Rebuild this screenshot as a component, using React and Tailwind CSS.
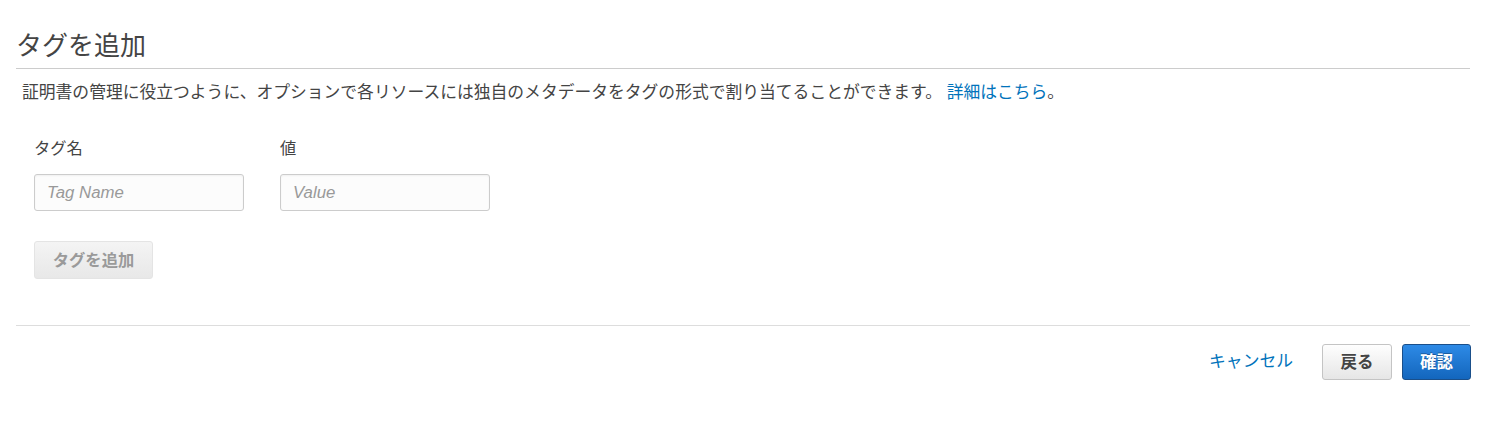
export default function App() {
  const font = { fontFamily: '"Liberation Sans", "Noto Sans CJK JP", sans-serif' };

  return (
    <div className="w-full min-h-[423px] bg-white pl-4 pr-[34px] text-[#444]" style={font}>
      <h1 className="text-[26px] leading-[30px] font-normal text-[#444] pt-[31px] pb-[7px] border-b border-[#ccc] mr-[1px]">
        タグを追加
      </h1>

      <p className="ml-[6px] mt-[14px] text-[16.8px] leading-[20px] text-[#444]">
        証明書の管理に役立つように、オプションで各リソースには独自のメタデータをタグの形式で割り当てることができます。{' '}
        <a href="#" className="text-[#0073bb]">詳細はこちら</a>。
      </p>

      <div className="pl-[18px] mt-[35px]">
        <div className="flex gap-[36px]">
          <div className="flex flex-col w-[210px]">
            <label className="text-[16.3px] leading-[20px] text-[#444]">タグ名</label>
            <input
              placeholder="Tag Name"
              className="mt-4 h-[37px] w-[210px] rounded-[3px] border border-[#ccc] bg-[#fcfcfc] px-[12px] text-[16.8px] shadow-[inset_0_1px_2px_rgba(0,0,0,0.05)] placeholder:italic placeholder:text-[#999] outline-none"
            />
          </div>
          <div className="flex flex-col w-[210px]">
            <label className="text-[16.3px] leading-[20px] text-[#444]">値</label>
            <input
              placeholder="Value"
              className="mt-4 h-[37px] w-[210px] rounded-[3px] border border-[#ccc] bg-[#fcfcfc] px-[12px] text-[16.8px] shadow-[inset_0_1px_2px_rgba(0,0,0,0.05)] placeholder:italic placeholder:text-[#999] outline-none"
            />
          </div>
        </div>

        <button
          disabled
          className="mt-[30px] h-[38px] w-[119px] rounded-[3px] border border-[#e4e4e4] bg-gradient-to-b from-[#f4f4f4] to-[#e8e8e8] text-[16.3px] font-bold text-[#9a9a9a]"
        >
          タグを追加
        </button>
      </div>

      <div className="mt-[46px] border-t border-[#ddd] mr-[1px]" />

      <div className="flex items-center justify-end mt-[18px]">
        <a href="#" className="text-[16.8px] leading-[20px] text-[#0073bb] mr-[29px]">キャンセル</a>
        <button className="h-[36px] w-[70px] rounded-[3px] border border-[#c4c4c4] bg-gradient-to-b from-[#fefefe] to-[#e6e6e6] text-[16.5px] font-bold text-[#444] mr-[10px]">
          戻る
        </button>
        <button className="h-[36px] w-[69px] rounded-[3px] border border-[#1a4f8a] bg-gradient-to-b from-[#2d8ae6] to-[#1366bd] text-[16.5px] font-bold text-white [text-shadow:0_-1px_0_rgba(0,0,0,0.3)]">
          確認
        </button>
      </div>
    </div>
  );
}
